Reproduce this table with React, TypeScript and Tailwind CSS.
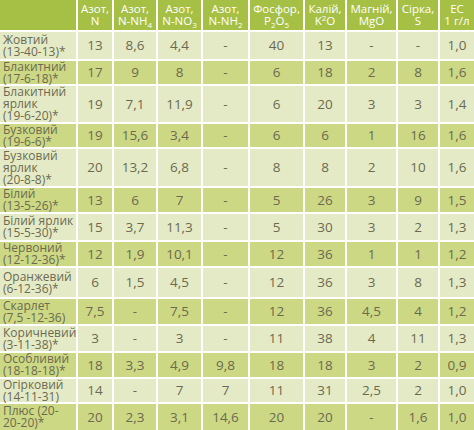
import React from "react";

type Row = { name: string[]; vals: string[]; dark: boolean };

const rows: Row[] = [
  { name: ["Жовтий", "(13-40-13)*"], vals: ["13", "8,6", "4,4", "-", "40", "13", "-", "-", "1,0"], dark: false },
  { name: ["Блакитний", "(17-6-18)*"], vals: ["17", "9", "8", "-", "6", "18", "2", "8", "1,6"], dark: true },
  { name: ["Блакитний", "ярлик", "(19-6-20)*"], vals: ["19", "7,1", "11,9", "-", "6", "20", "3", "3", "1,4"], dark: false },
  { name: ["Бузковий", "(19-6-6)*"], vals: ["19", "15,6", "3,4", "-", "6", "6", "1", "16", "1,6"], dark: true },
  { name: ["Бузковий", "ярлик", "(20-8-8)*"], vals: ["20", "13,2", "6,8", "-", "8", "8", "2", "10", "1,6"], dark: false },
  { name: ["Білий", "(13-5-26)*"], vals: ["13", "6", "7", "-", "5", "26", "3", "9", "1,5"], dark: true },
  { name: ["Білий ярлик", "(15-5-30)*"], vals: ["15", "3,7", "11,3", "-", "5", "30", "3", "2", "1,3"], dark: false },
  { name: ["Червоний", "(12-12-36)*"], vals: ["12", "1,9", "10,1", "-", "12", "36", "1", "1", "1,2"], dark: true },
  { name: ["Оранжевий", "(6-12-36)*"], vals: ["6", "1,5", "4,5", "-", "12", "36", "3", "8", "1,3"], dark: false },
  { name: ["Скарлет", "(7,5 -12-36)"], vals: ["7,5", "-", "7,5", "-", "12", "36", "4,5", "4", "1,2"], dark: true },
  { name: ["Коричневий", "(3-11-38)*"], vals: ["3", "-", "3", "-", "11", "38", "4", "11", "1,3"], dark: false },
  { name: ["Особливий", "(18-18-18)*"], vals: ["18", "3,3", "4,9", "9,8", "18", "18", "3", "2", "0,9"], dark: true },
  { name: ["Огірковий", "(14-11-31)"], vals: ["14", "-", "7", "7", "11", "31", "2,5", "2", "1,0"], dark: false },
  { name: ["Плюс (20-", "20-20)*"], vals: ["20", "2,3", "3,1", "14,6", "20", "20", "-", "1,6", "1,0"], dark: true },
];

const Sub = ({ c }: { c: string }) => (
  <span className="inline-block text-[8px] translate-y-[3px] leading-none align-baseline">{c}</span>
);

const headers: React.ReactNode[] = [
  <>Азот,<br />N</>,
  <>Азот,<br />N-NH<Sub c="4" /></>,
  <>Азот,<br />N-NO<Sub c="3" /></>,
  <>Азот,<br />N-NH<Sub c="2" /></>,
  <>Фосфор,<br />P<Sub c="2" />O<Sub c="5" /></>,
  <>Калій,<br />K<span className="inline-block text-[8px] -translate-y-[4px] leading-none align-baseline">2</span>O</>,
  <>Магній,<br />MgO</>,
  <>Сірка,<br />S</>,
  <>EC<br />1 г/л</>,
];

export default function App() {
  return (
    <div
      className="w-[474px] h-[430px] bg-white grid gap-[2px] grid-cols-[76px_34px_42px_43px_45px_53px_40px_49px_40px_34px] grid-rows-[30px_27px_23px_36px_23px_37px_24px_26px_24px_29px_25px_25px_24px_23px_26px] overflow-hidden"
      style={{ fontFamily: '"Open Sans", "Noto Sans", sans-serif' }}
    >
      <div className="bg-[#a6bf45]" />
      {headers.map((h, i) => (
        <div
          key={i}
          className="bg-[#a6bf45] text-white text-[11.5px] leading-[12.5px] flex items-center justify-center text-center whitespace-nowrap"
        >
          <div>{h}</div>
        </div>
      ))}
      {rows.map((r, ri) => (
        <React.Fragment key={ri}>
          <div
            className={`${r.dark ? "bg-[#cdd884]" : "bg-[#e5eac6]"} text-[#6b6a50] text-[12px] leading-[12px] flex flex-col justify-center pl-[3px] whitespace-nowrap`}
          >
            {r.name.map((n, k) => (
              <span key={k}>{n}</span>
            ))}
          </div>
          {r.vals.map((v, vi) => (
            <div
              key={vi}
              className={`${r.dark ? "bg-[#cdd884]" : "bg-[#e5eac6]"} text-[#6b6a50] text-[13.5px] flex items-center justify-center`}
            >
              {v}
            </div>
          ))}
        </React.Fragment>
      ))}
    </div>
  );
}
